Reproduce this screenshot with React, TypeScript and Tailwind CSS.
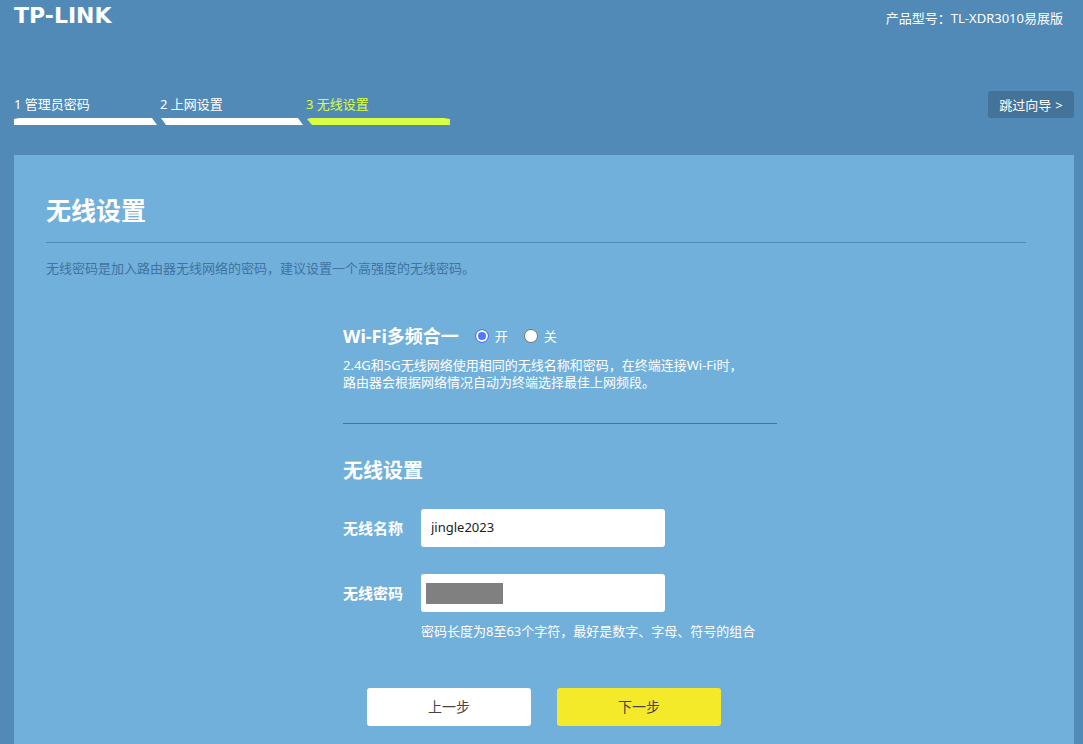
// ─────────────────────────────────────────────────────────────
// App.tsx
// 路由器设置向导 - 第三步：无线设置
// ─────────────────────────────────────────────────────────────

import { useState } from 'react';
import { clsx } from 'clsx';

interface Step {
  label:  string;
  points: string;   // 进度条的轮廓
}

const STEPS: Step[] = [
  { label: '1 管理员密码', points: '0,1 5,0 138,0 143,7 0,7' },
  { label: '2 上网设置',   points: '1,0 138,0 143,7 6,7' },
  { label: '3 无线设置',   points: '1,1 5,0 138,0 144,1 144,7 6,7' },
];

function StepBar({ current }: { current: number }) {
  return (
    <ol className="flex">
      {STEPS.map((step, i) => (
        <li
          key={step.label}
          className={clsx('w-[146px] text-[13px] leading-5', i === current ? 'text-[#d9ff45]' : 'text-white')}
        >
          {step.label}
          <svg viewBox="0 0 146 7" className="mt-1 block h-[7px] w-full" fill="currentColor" aria-hidden="true">
            <polygon points={step.points} />
          </svg>
        </li>
      ))}
    </ol>
  );
}

interface RadioProps {
  label:    string;
  checked:  boolean;
  onSelect: () => void;
}

function Radio({ label, checked, onSelect }: RadioProps) {
  return (
    <label className="flex items-center gap-[6px] text-[13px] leading-5">
      <input
        type="radio"
        name="band"
        checked={checked}
        onChange={onSelect}
        className="h-[14px] w-[14px] appearance-none rounded-full border border-[#767676] bg-white checked:border-[#5078ff] checked:bg-[#5078ff] checked:shadow-[inset_0_0_0_2px_white]"
      />
      {label}
    </label>
  );
}

export default function App() {
  const [merged, setMerged] = useState(true);
  const [ssid, setSsid] = useState('jingle2023');
  const [password, setPassword] = useState('');

  return (
    <div className="flex min-h-screen flex-col bg-[#528ab7] pr-[9px] pl-[14px] font-['Noto_Sans','Noto_Sans_CJK_SC',sans-serif] text-white">
      {/* 顶部：标志与型号 */}
      <header className="flex h-9 items-center justify-between pr-[11px]">
        <div className="pb-1 font-['DejaVu_Sans',sans-serif] text-[22px] leading-6 font-bold">TP-LINK</div>
        <p className="text-[13px] leading-5">产品型号：TL-XDR3010易展版</p>
      </header>

      {/* 向导步骤 */}
      <nav className="mt-[55px] flex items-start justify-between">
        <div className="pt-[3px]">
          <StepBar current={2} />
        </div>
        <button className="flex h-[27px] w-[86px] items-center justify-center gap-1 rounded-[3px] bg-[#437398] text-[13px] leading-5">
          跳过向导 <span>&gt;</span>
        </button>
      </nav>

      <main className="mt-[30px] flex-1 bg-[#72b0dc] pr-12 pb-[18px] pl-8">
        <h1 className="border-b border-[#528ab7] pt-[35px] pb-3 text-[25px] leading-10 font-bold">无线设置</h1>
        <p className="mt-[15px] text-[13px] leading-5 text-[#3f73a0]">
          无线密码是加入路由器无线网络的密码，建议设置一个高强度的无线密码。
        </p>

        <form onSubmit={(e) => e.preventDefault()} className="-mr-4">
          <div className="mx-auto max-w-[466px] pl-8">
            {/* 多频合一 */}
            <fieldset className="border-b border-[#3f73a0] pb-8">
              <div className="flex items-center pt-[46px]">
                <h2 className="text-[18px] leading-6 font-bold">Wi-Fi多频合一</h2>
                <div className="ml-4 flex gap-4">
                  <Radio label="开" checked={merged} onSelect={() => setMerged(true)} />
                  <Radio label="关" checked={!merged} onSelect={() => setMerged(false)} />
                </div>
              </div>
              <p className="mt-[9px] text-[13px] leading-[17px]">
                2.4G和5G无线网络使用相同的无线名称和密码，在终端连接Wi-Fi时，
                <br />
                路由器会根据网络情况自动为终端选择最佳上网频段。
              </p>
            </fieldset>

            {/* 名称与密码 */}
            <h2 className="mt-8 text-[20px] leading-[30px] font-bold">无线设置</h2>
            <div className="mt-[23px] flex items-center">
              <label htmlFor="ssid" className="w-[78px] text-[15px] leading-6 font-bold">无线名称</label>
              <input
                id="ssid"
                value={ssid}
                onChange={(e) => setSsid(e.target.value)}
                className="h-[38px] w-[244px] rounded-[3px] bg-white px-[10px] pb-[2px] text-[13px] text-[#222]"
              />
            </div>
            <div className="mt-[27px] flex items-center">
              <label htmlFor="password" className="w-[78px] text-[15px] leading-6 font-bold">无线密码</label>
              <div className="flex h-[38px] w-[244px] items-center rounded-[3px] bg-white px-[5px]">
                <span className="h-[21px] w-[77px] bg-[#808080]" />
                <input
                  id="password"
                  type="password"
                  value={password}
                  onChange={(e) => setPassword(e.target.value)}
                  className="min-w-0 flex-1 text-[13px] text-[#222] outline-none"
                />
              </div>
            </div>
            <p className="mt-[9px] pl-[78px] text-[13px] leading-5">
              密码长度为8至63个字符，最好是数字、字母、符号的组合
            </p>
          </div>

          <div className="mt-[47px] flex justify-center gap-[26px] text-[14px] leading-5 text-[#444]">
            <button type="button" className="h-[38px] w-[164px] rounded-[3px] bg-white">上一步</button>
            <button type="submit" className="h-[38px] w-[164px] rounded-[3px] bg-[#f5ea2a]">下一步</button>
          </div>
        </form>
      </main>
    </div>
  );
}
